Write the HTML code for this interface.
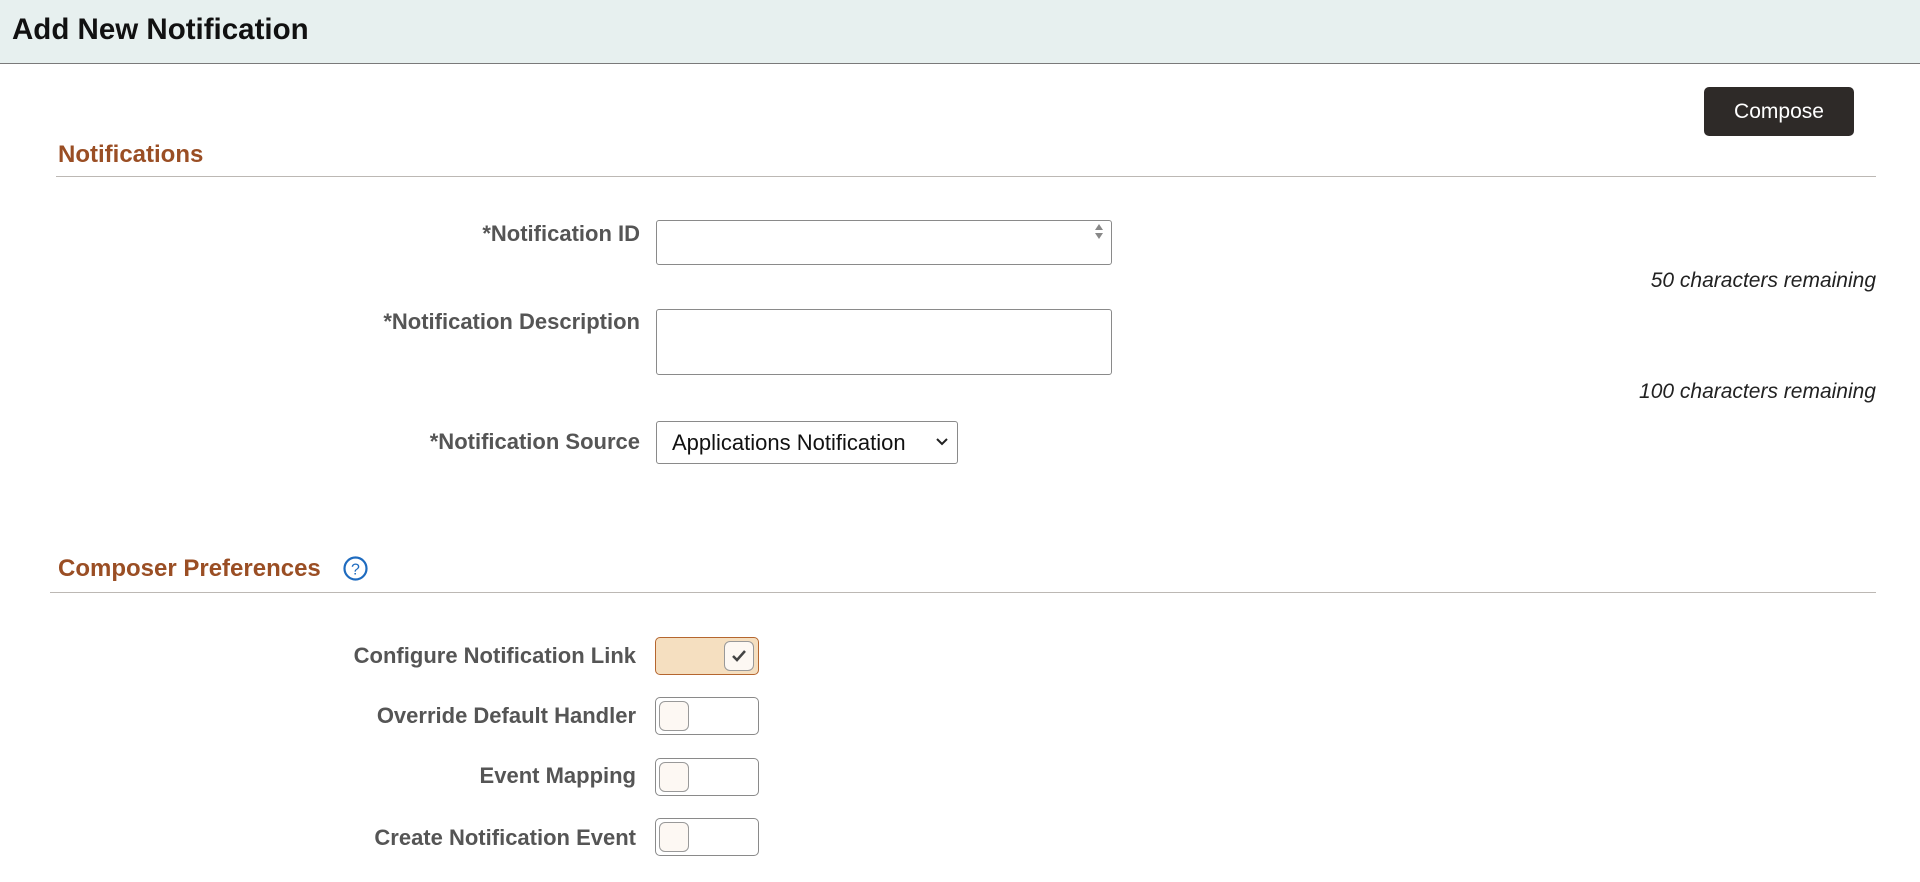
<!DOCTYPE html>
<html><head><style>
body{margin:0;width:1920px;height:882px;background:#fff;font-family:"Liberation Sans",Arial,sans-serif;position:relative;overflow:hidden}
.a{position:absolute}
.hdr{left:0;top:0;width:1920px;height:63px;background:#e7f0ef;border-bottom:1px solid #7a7a7a}
.title{left:12px;top:13px;font-size:29.5px;font-weight:bold;color:#111}
.btn{left:1704px;top:87px;width:150px;height:49px;background:#2e2a28;border-radius:5px;color:#fff;font-size:21px;line-height:49px;text-align:center}
.h2{font-size:24px;font-weight:bold;color:#9a4e24}
.line{height:1px;background:#bcb8b4}
.lbl{font-size:22px;font-weight:bold;color:#555;text-align:right}
.inp{border:1px solid #8a8a8a;border-radius:3px;background:#fff;box-sizing:border-box}
.rem{font-size:21px;font-style:italic;color:#222;text-align:right;right:44px}
.tg{left:655px;width:104px;height:38px;box-sizing:border-box;border:1px solid #8a8a8a;border-radius:5px;background:#fff}
.kn{position:absolute;top:3px;width:30px;height:30px;box-sizing:border-box;border:1px solid #999;border-radius:6px;background:#fdf8f3}
</style></head><body>
<div class="a hdr"></div>
<div class="a title">Add New Notification</div>
<div class="a btn">Compose</div>
<div class="a h2" style="left:58px;top:141px">Notifications</div>
<div class="a line" style="left:56px;top:176px;width:1820px"></div>

<div class="a lbl" style="right:1280px;top:221px">*Notification ID</div>
<div class="a inp" style="left:656px;top:220px;width:456px;height:45px"></div>
<svg class="a" style="left:1091px;top:222px" width="16" height="20"><path d="M4 8 L8 2 L12 8Z M4 11 L8 17 L12 11Z" fill="#888"/></svg>
<div class="a rem" style="top:269px">50 characters remaining</div>

<div class="a lbl" style="right:1280px;top:309px">*Notification Description</div>
<div class="a inp" style="left:656px;top:309px;width:456px;height:66px"></div>
<div class="a rem" style="top:380px">100 characters remaining</div>

<div class="a lbl" style="right:1280px;top:429px">*Notification Source</div>
<div class="a inp" style="left:656px;top:421px;width:302px;height:43px;font-size:22px;color:#111;padding:8px 0 0 15px">Applications Notification</div>
<svg class="a" style="left:935px;top:436px" width="14" height="12"><path d="M2 3 L7 8 L12 3" stroke="#222" stroke-width="2" fill="none"/></svg>

<div class="a h2" style="left:58px;top:555px">Composer Preferences</div>
<svg class="a" style="left:342px;top:555px" width="27" height="27"><circle cx="13.5" cy="13.5" r="11" fill="none" stroke="#1e6bbf" stroke-width="2.2"/><text x="13.5" y="19.5" text-anchor="middle" font-size="16" font-family="Liberation Sans" fill="#1e6bbf">?</text></svg>
<div class="a line" style="left:50px;top:592px;width:1826px"></div>

<div class="a lbl" style="right:1284px;top:643px">Configure Notification Link</div>
<div class="a tg" style="top:637px;background:#f5dfc0;border-color:#b5662f"><div class="kn" style="left:68px"><svg width="28" height="28" style="position:absolute;left:0;top:0"><path d="M8 14 L12 18 L20 9" stroke="#444" stroke-width="2.5" fill="none"/></svg></div></div>
<div class="a lbl" style="right:1284px;top:703px">Override Default Handler</div>
<div class="a tg" style="top:697px"><div class="kn" style="left:3px"></div></div>
<div class="a lbl" style="right:1284px;top:763px">Event Mapping</div>
<div class="a tg" style="top:758px"><div class="kn" style="left:3px"></div></div>
<div class="a lbl" style="right:1284px;top:825px">Create Notification Event</div>
<div class="a tg" style="top:818px"><div class="kn" style="left:3px"></div></div>
</body></html>
